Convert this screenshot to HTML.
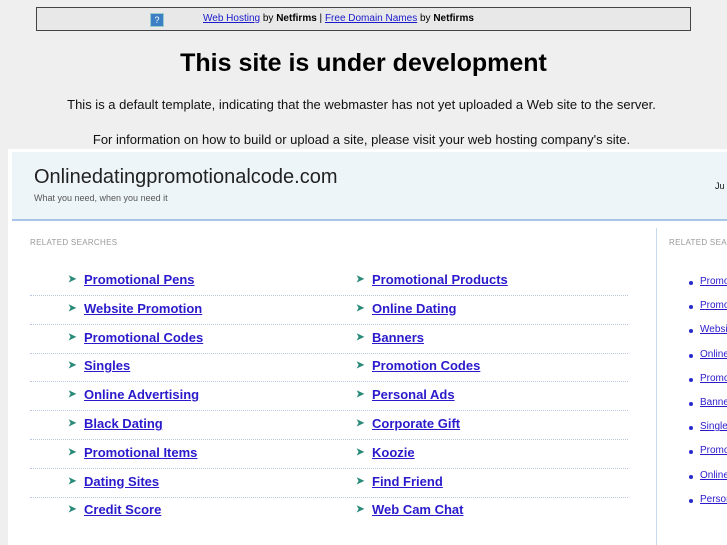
<!DOCTYPE html>
<html><head><style>
*{margin:0;padding:0}
html,body{width:727px;height:545px;overflow:hidden}
body{background:#efefef;font-family:"Liberation Sans",sans-serif}
#w{position:relative;width:727px;height:545px;overflow:hidden}
.a{position:absolute;white-space:nowrap}
.top{left:36px;top:7px;width:653px;height:22px;border:1px solid #444;background:#e8e8e8;font-size:10px;color:#000}
.top a{color:#1a1acc;text-decoration:underline}
.q{left:113px;top:5px;width:12px;height:12px;background:#3d7fc4;border:1px solid #9cc;color:#fff;font-size:9px;text-align:center;line-height:12px}
h1{position:absolute;left:0;width:727px;top:49px;text-align:center;font-size:25px;font-weight:bold;color:#000}
.p{left:0;width:723px;text-align:center;font-size:13px;color:#111}
.panel{left:8px;top:149px;width:719px;height:396px;background:#fff}
.hdr{left:12px;top:152px;width:715px;height:67px;background:#eef5f8;border-bottom:2px solid #a8c4e8}
.l{font-size:13px;font-weight:bold;color:#2a1acc;text-decoration:underline}
.ar{font-size:10px;font-weight:bold;color:#2a8a7a}
.dl{left:30px;width:598px;height:0;border-top:1px dotted #b8c8e0}
.r{font-size:10px;color:#2a1acc;text-decoration:underline}
.b{width:4px;height:4px;border-radius:2px;background:#2a2acc}
</style></head><body><div id="w">
<div class="a top">
<div class="a q">?</div>
<div class="a" style="left:166px;top:5px"><a>Web Hosting</a> by <b>Netfirms</b> | <a>Free Domain Names</a> by <b>Netfirms</b></div>
</div>
<h1>This site is under development</h1>
<div class="a p" style="top:97px">This is a default template, indicating that the webmaster has not yet uploaded a Web site to the server.</div>
<div class="a p" style="top:132px">For information on how to build or upload a site, please visit your web hosting company's site.</div>
<div class="a panel"></div>
<div class="a hdr"></div>
<div class="a" style="left:34px;top:166px;font-size:20px;color:#222">Onlinedatingpromotionalcode.com</div>
<div class="a" style="left:34px;top:193px;font-size:9px;color:#555">What you need, when you need it</div>
<div class="a" style="left:715px;top:181px;font-size:9px;color:#111">Ju</div>
<div class="a" style="left:30px;top:238px;font-size:8px;color:#999;letter-spacing:.3px">RELATED SEARCHES</div>
<div class="a" style="left:669px;top:238px;font-size:8px;color:#999;letter-spacing:.3px">RELATED SEARCHES</div>
<div class="a" style="left:656px;top:228px;width:1px;height:317px;background:#c8d8ee"></div>
<div id="L"></div>
</div>
<script>
var L=["Promotional Pens","Website Promotion","Promotional Codes","Singles","Online Advertising","Black Dating","Promotional Items","Dating Sites","Credit Score"];
var R=["Promotional Products","Online Dating","Banners","Promotion Codes","Personal Ads","Corporate Gift","Koozie","Find Friend","Web Cam Chat"];
var S=["Promotional Pens","Promotional Products","Website Promotion","Online Dating","Promotional Codes","Banners","Singles","Promotion Codes","Online Advertising","Personal Ads"];
var h="";
for(var i=0;i<9;i++){var y=272+i*28.8;
h+='<div class="a ar" style="left:68px;top:'+(y+2)+'px">&#10148;</div><div class="a l" style="left:84px;top:'+y+'px">'+L[i]+'</div>';
h+='<div class="a ar" style="left:356px;top:'+(y+2)+'px">&#10148;</div><div class="a l" style="left:372px;top:'+y+'px">'+R[i]+'</div>';
if(i<8)h+='<div class="a dl" style="top:'+(y+23)+'px"></div>';}
for(var j=0;j<10;j++){var y=276+j*24.2;
h+='<div class="a b" style="left:689px;top:'+(y+5)+'px"></div><div class="a r" style="left:700px;top:'+y+'px">'+S[j]+'</div>';}
document.getElementById("L").innerHTML=h;
</script>
</body></html>
